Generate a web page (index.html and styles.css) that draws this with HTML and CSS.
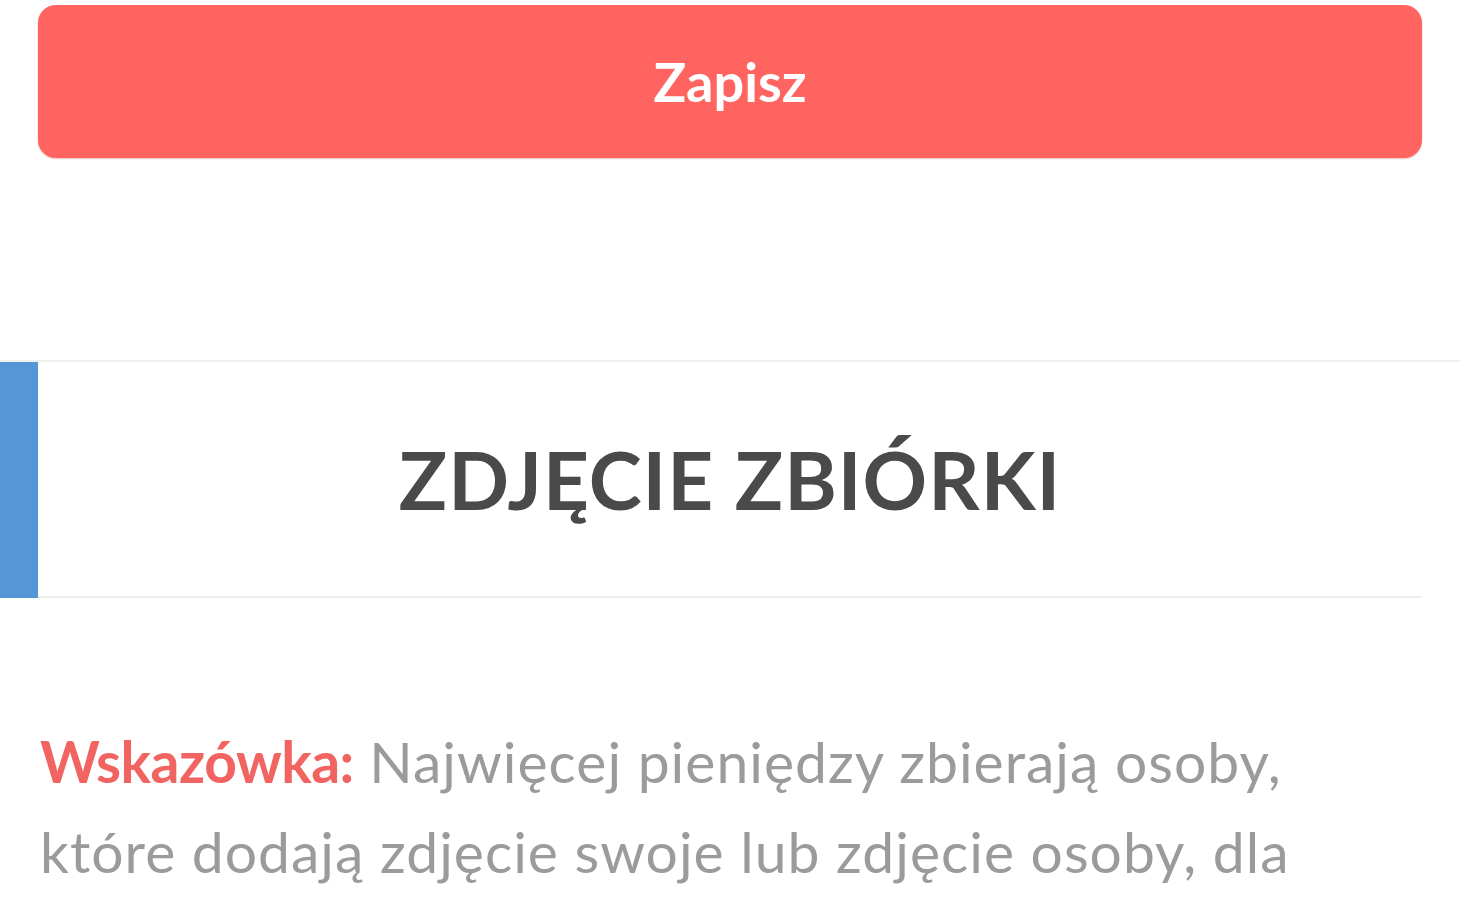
FILE: index.html
```html
<!DOCTYPE html>
<html lang="pl">
<head>
<meta charset="utf-8">
<link rel="stylesheet" href="styles.css">
</head>
<body>
<div class="page">
  <div class="btn-wrap">
    <button class="save-btn">Zapisz</button>
  </div>
  <section class="photo-section">
    <div class="section-head">
      <div class="accent"></div>
      <h2 class="section-title">ZDJĘCIE ZBIÓRKI</h2>
    </div>
    <p class="tip"><strong class="tip-label">Wskazówka:</strong> Najwięcej pieniędzy zbierają osoby, które dodają zdjęcie swoje lub zdjęcie osoby, dla której zbierają pieniądze.</p>
  </section>
</div>
</body>
</html>
```

FILE: styles.css
```css
html, body {
  margin: 0;
  padding: 0;
  background: #ffffff;
  font-family: Lato, "Open Sans", "Liberation Sans", sans-serif;
  overflow: hidden;
}
.page {
  width: 1460px;
  height: 912px;
  overflow: hidden;
}
.btn-wrap {
  padding: 5px 38px 0 38px;
}
.save-btn {
  display: block;
  width: 100%;
  height: 153px;
  border: none;
  border-radius: 18px;
  background: #ff6461;
  color: #ffffff;
  font-family: Lato, "Open Sans", "Liberation Sans", sans-serif;
  font-weight: 700;
  font-size: 54px;
  box-shadow: 0 1px 2px rgba(180, 80, 80, 0.35);
  padding: 0;
}
.photo-section {
  margin-top: 202px;
  border-top: 2px solid #f0f0f0;
}
.section-head {
  display: flex;
  height: 236px;
}
.accent {
  width: 38px;
  background: #5596d6;
  flex: none;
}
.section-title {
  flex: 1;
  margin: 0 38px 0 0;
  border-bottom: 2px solid #efefef;
  display: flex;
  align-items: center;
  justify-content: center;
  font-size: 80px;
  font-weight: 700;
  color: #4a4a4a;
  letter-spacing: 1px;
  padding-top: 0;
}
.tip {
  margin: 0;
  padding: 118px 100px 0 40px;
  font-size: 57px;
  line-height: 90px;
  color: #9b9b9b;
  letter-spacing: 1px;
}
.tip-label {
  color: #f26461;
  font-weight: 700;
  letter-spacing: -0.5px;
}
```
